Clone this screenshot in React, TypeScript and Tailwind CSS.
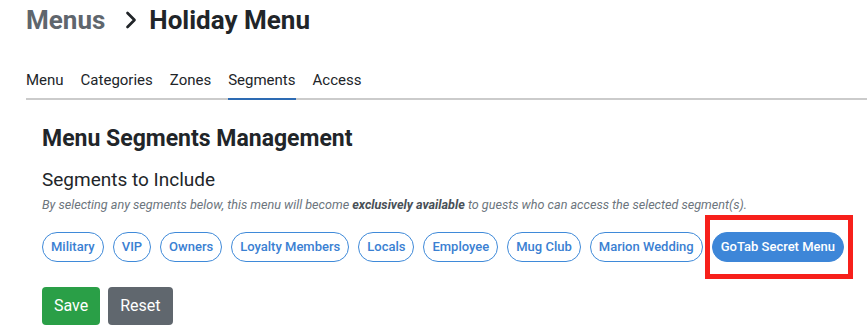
import { ChevronRight } from "lucide-react";

const TABS = ["Menu", "Categories", "Zones", "Segments", "Access"];

const SEGMENTS = [
    "Military",
    "VIP",
    "Owners",
    "Loyalty Members",
    "Locals",
    "Employee",
    "Mug Club",
    "Marion Wedding",
];

const App = () => {
    return (
        <div className="h-[336px] w-[867px] overflow-hidden bg-white font-['Roboto',sans-serif] text-[#212529]">
            <div className="flex items-center pl-[26px] pt-1 text-[26px] font-bold leading-8">
                <span className="text-[#5f666d]">Menus</span>
                <ChevronRight
                    className="ml-[12px] mr-[4px] h-7 w-7 text-[#212529]"
                    strokeWidth={2.3}
                />
                <span>Holiday Menu</span>
            </div>

            <div className="ml-[26px] mt-[34px] flex gap-[17px] border-b-2 border-[#cbcbcb]">
                {TABS.map((tab) => (
                    <div
                        key={tab}
                        className={
                            tab === "Segments"
                                ? "-mb-[2px] border-b-2 border-[#2d6bb3] pb-[8px] text-[15px] leading-5"
                                : "pb-[8px] text-[15px] leading-5"
                        }
                    >
                        {tab}
                    </div>
                ))}
            </div>

            <div className="pl-[42px]">
                <h2 className="mt-[25px] text-[23px] font-bold leading-7">
                    Menu Segments Management
                </h2>
                <p className="mt-[15px] text-[19px] leading-6">
                    Segments to Include
                </p>
                <p className="mt-[5px] text-[12.6px] italic leading-4 text-[#6c757d]">
                    By selecting any segments below, this menu will become{" "}
                    <b className="font-bold text-[#495057]">
                        exclusively available
                    </b>{" "}
                    to guests who can access the selected segment(s).
                </p>

                <div className="mt-[19px] flex gap-[9px]">
                    {SEGMENTS.map((seg) => (
                        <div
                            key={seg}
                            className="flex h-[30px] items-center rounded-full border border-[#3f8ad9] px-2 text-[13px] font-medium text-[#3a80d2]"
                        >
                            {seg}
                        </div>
                    ))}
                    <div className="relative">
                        <div className="flex h-[30px] items-center rounded-full border border-[#3d86d8] bg-[#3d86d8] px-2 text-[13px] font-medium text-white">
                            GoTab Secret Menu
                        </div>
                        <div className="absolute -bottom-[17px] -left-[7px] -right-[9px] -top-[17px] border-[5px] border-[#f7201b]" />
                    </div>
                </div>

                <div className="mt-[25px] flex gap-2">
                    <button className="rounded bg-[#2a9f47] px-[12px] py-2 text-[16px] leading-[22px] text-white">
                        Save
                    </button>
                    <button className="rounded bg-[#60676e] px-[12px] py-2 text-[16px] leading-[22px] text-white">
                        Reset
                    </button>
                </div>
            </div>
        </div>
    );
};

export default App;
